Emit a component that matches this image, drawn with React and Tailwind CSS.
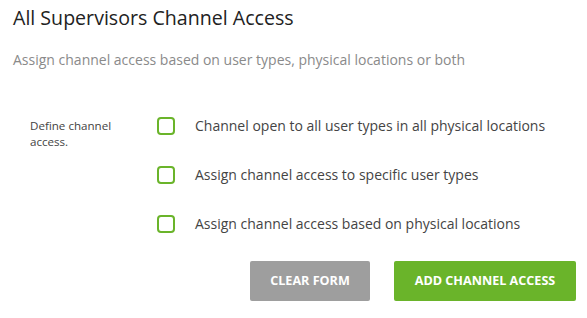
const OPTIONS = [
  "Channel open to all user types in all physical locations",
  "Assign channel access to specific user types",
  "Assign channel access based on physical locations",
];

export default function App() {
  return (
    <div className="w-[587px] h-[318px] bg-white font-['Open_Sans',sans-serif] text-[#333]">
      <div className="px-[13px] pt-[4px]">
        <h1 className="text-[19.6px] leading-[28px] text-[#222]">All Supervisors Channel Access</h1>
        <p className="mt-[18px] text-[14px] leading-[20px] text-[#8a8a8a]">
          Assign channel access based on user types, physical locations or both
        </p>
      </div>

      <div className="flex mt-[46px] pl-[30px]">
        <div className="w-[127px] pt-[2px] text-[11.6px] leading-[16px] text-[#444]">
          Define channel
          <br />
          access.
        </div>
        <div className="flex flex-col gap-[30px]">
          {OPTIONS.map((label) => (
            <label key={label} className="flex items-center gap-[20px] cursor-pointer">
              <span className="w-[18px] h-[18px] rounded-[4px] border-2 border-[#6ab42a] bg-white shrink-0" />
              <span className="text-[14px] leading-[19px] text-[#444]">{label}</span>
            </label>
          ))}
        </div>
      </div>

      <div className="flex justify-end gap-[24px] mt-[28px] pr-[11px]">
        <button className="w-[120px] h-[40px] rounded-[2px] bg-[#9e9e9e] text-white text-[12.6px] font-bold">
          CLEAR FORM
        </button>
        <button className="w-[182px] h-[40px] rounded-[2px] bg-[#6ab42a] text-white text-[12.6px] font-bold">
          ADD CHANNEL ACCESS
        </button>
      </div>
    </div>
  );
}
